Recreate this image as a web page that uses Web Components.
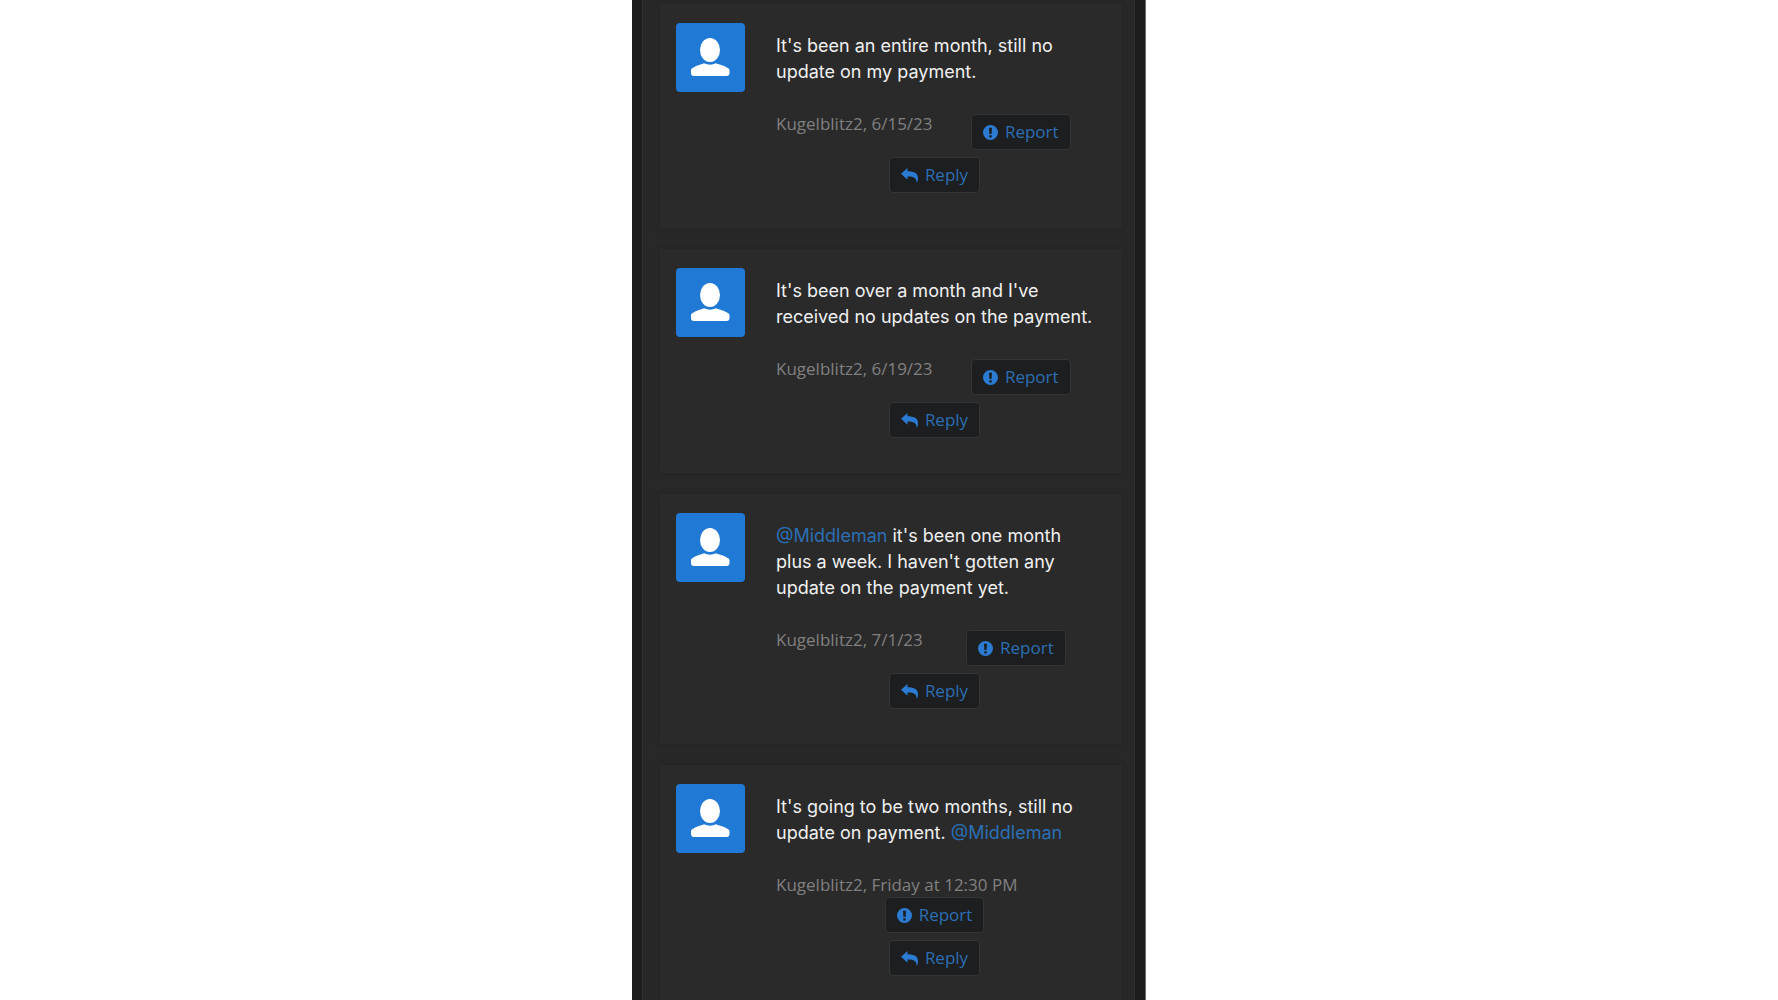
<!DOCTYPE html>
<html lang="en">
<head>
<meta charset="utf-8">
<title>Comments</title>
<style>
  html, body { height: 100%; margin: 0; }
  body { background: #fff; overflow: hidden; }
</style>
</head>
<body>
<comment-thread>
  <comment-card author="Kugelblitz2" date="6/15/23">It's been an entire month, still no update on my payment.</comment-card>
  <comment-card author="Kugelblitz2" date="6/19/23">It's been over a month and I've received no updates on the payment.</comment-card>
  <comment-card author="Kugelblitz2" date="7/1/23"><a href="#middleman">@Middleman</a> it's been one month plus a week. I haven't gotten any update on the payment yet.</comment-card>
  <comment-card author="Kugelblitz2" date="Friday at 12:30 PM">It's going to be two months, still no update on payment. <a href="#middleman">@Middleman</a></comment-card>
</comment-thread>

<template id="thread-template">
  <style>
    :host {
      display: block;
      box-sizing: border-box;
      max-width: 514px;
      min-height: 100%;
      margin: 0 auto;
      padding: 0 10px;
      background: #1d1d1d;
      border: solid #6a6a6a;
      border-width: 0 1px 0 0;
    }
    main {
      display: flex;
      flex-direction: column;
      gap: 21px;
      padding: 4px 12px 21px 17px;
      background: #282828;
      border: solid #303030;
      border-width: 0 1px;
    }
  </style>
  <main><slot></slot></main>
</template>

<template id="card-template">
  <style>
    :host {
      display: block;
      background: #2a2a2a;
      box-shadow: 0 0 4px #242424;
    }
    article {
      display: flex;
      align-items: flex-start;
      gap: 15px;
      padding: 19px 13px 28px 16px;
    }
    .content { flex: 1; min-width: 0; }
    .message {
      margin: 0 0 29px;
      padding: 10px 12px 0 16px;
      font: 18px/26px Inter, sans-serif;
      color: #f0f0f0;
    }
    ::slotted(a) { color: #2b6fb5; text-decoration: none; }
    footer { display: flex; flex-wrap: wrap; align-items: flex-start; }
    .meta {
      padding: 0 0 2px 16px;
      font: 17px/20px "Open Sans", sans-serif;
      color: #808080;
    }
    .report, .reply {
      display: flex;
      flex: 1;
      justify-content: center;
      margin-bottom: 7px;
    }
    .reply { flex-basis: 100%; }
  </style>
  <article>
    <user-avatar></user-avatar>
    <div class="content">
      <p class="message"><slot></slot></p>
      <footer>
        <span class="meta"></span>
        <div class="report"><action-button icon="report">Report</action-button></div>
        <div class="reply"><action-button icon="reply">Reply</action-button></div>
      </footer>
    </div>
  </article>
</template>

<template id="avatar-template">
  <style>
    :host { display: block; flex: none; width: 69px; height: 69px; border-radius: 4px; overflow: hidden; background: #207ad5; }
    svg { display: block; width: 100%; height: 100%; }
  </style>
  <svg viewBox="0 0 69 69" role="img" aria-label="User avatar">
    <g fill="#fff">
      <ellipse cx="34" cy="27" rx="10" ry="12"/>
      <path d="M15 50V47C15.500 44 24 42 28 40.300Q34 43 40 40.300C44 42 53 44 53.500 47V50Q53.500 53 50.500 53H18Q15 53 15 50Z"/>
    </g>
  </svg>
</template>

<template id="button-template">
  <style>
    :host { display: block; flex: none; }
    button {
      display: flex;
      align-items: center;
      gap: 7px;
      box-sizing: border-box;
      height: 36px;
      margin: 0;
      padding: 0 11px;
      border: 1px solid #343434;
      border-radius: 4px;
      background: #1d1e1f;
      color: #2c6fb4;
      font: 17px/24px "Open Sans", sans-serif;
      cursor: pointer;
    }
    svg { display: block; height: 15px; fill: #2b7bd3; }
    svg[hidden] { display: none; }
  </style>
  <button type="button">
    <svg class="report" width="15" viewBox="0 0 15 15" aria-hidden="true"><path fill-rule="evenodd" d="M7.500 0A7.500 7.500 0 1 1 7.500 15A7.500 7.500 0 0 1 7.500 0ZM6 2.800L6.400 9H8.600L9 2.800ZM6.300 10.200V12.400H8.700V10.200Z"/></svg>
    <svg class="reply" width="17" viewBox="0 0 17 15" aria-hidden="true"><path d="M0 5.800L6.500 0V3.300C13 3.300 17 5.200 17 10.500C17 12.300 16.500 13.800 15.700 15C15.800 10 13 8.500 6.500 8.500V11.800Z"/></svg>
    <span><slot></slot></span>
  </button>
</template>

<script>
  class TemplateElement extends HTMLElement {
    constructor() {
      super();
      const template = document.getElementById(this.constructor.templateId);
      this.attachShadow({ mode: "open" }).append(template.content.cloneNode(true));
    }
  }

  class UserAvatar extends TemplateElement {
    static templateId = "avatar-template";
  }

  class ActionButton extends TemplateElement {
    static templateId = "button-template";
    connectedCallback() {
      for (const svg of this.shadowRoot.querySelectorAll("svg")) {
        svg.toggleAttribute("hidden", !svg.classList.contains(this.getAttribute("icon")));
      }
    }
  }

  class CommentCard extends TemplateElement {
    static templateId = "card-template";
    connectedCallback() {
      this.shadowRoot.querySelector(".meta").textContent =
        `${this.getAttribute("author")}, ${this.getAttribute("date")}`;
    }
  }

  class CommentThread extends TemplateElement {
    static templateId = "thread-template";
  }

  customElements.define("user-avatar", UserAvatar);
  customElements.define("action-button", ActionButton);
  customElements.define("comment-card", CommentCard);
  customElements.define("comment-thread", CommentThread);
</script>
</body>
</html>
